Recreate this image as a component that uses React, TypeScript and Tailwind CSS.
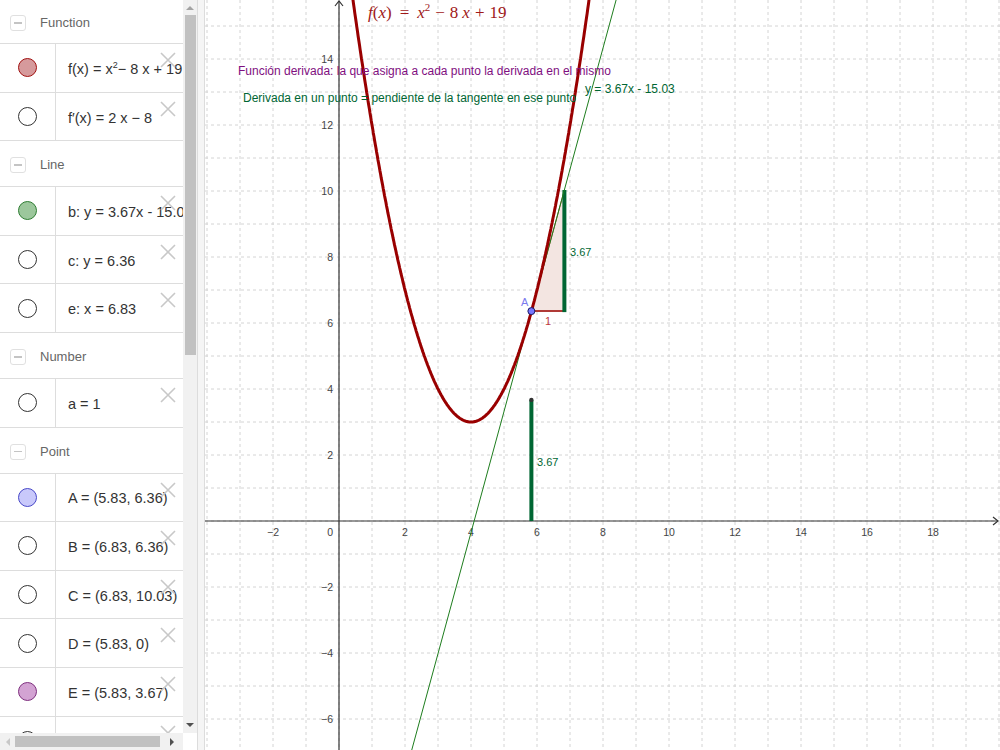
import React from "react";

type Row =
  | { kind: "header"; label: string; h: string }
  | { kind: "item"; text: React.ReactNode; fill?: string; stroke?: string };

const rows: Row[] = [
  { kind: "header", label: "Function", h: "h-[44px]" },
  {
    kind: "item",
    text: (
      <>
        f(x) = x<sup className="text-[9px]">2</sup> − 8 x + 19
      </>
    ),
    fill: "#d69a9c",
    stroke: "#a01010",
  },
  { kind: "item", text: "f′(x) = 2 x − 8" },
  { kind: "header", label: "Line", h: "h-[46px]" },
  { kind: "item", text: "b: y = 3.67x - 15.03", fill: "#9cc79c", stroke: "#2e7d32" },
  { kind: "item", text: "c: y = 6.36" },
  { kind: "item", text: "e: x = 6.83" },
  { kind: "header", label: "Number", h: "h-[46px]" },
  { kind: "item", text: "a = 1" },
  { kind: "header", label: "Point", h: "h-[46px]" },
  { kind: "item", text: "A = (5.83, 6.36)", fill: "#c9c9fb", stroke: "#4848c8" },
  { kind: "item", text: "B = (6.83, 6.36)" },
  { kind: "item", text: "C = (6.83, 10.03)" },
  { kind: "item", text: "D = (5.83, 0)" },
  { kind: "item", text: "E = (5.83, 3.67)", fill: "#d3a3d3", stroke: "#7f2f7f" },
  { kind: "item", text: "F = (6.83, 3.67)" },
];

// graph coords -> page pixels
const ox = 339;
const oy = 521;
const u = 33;
const px = (x: number) => ox + u * x;
const py = (y: number) => oy - u * y;

function XIcon() {
  return (
    <svg width="18" height="18" viewBox="0 0 18 18" className="absolute right-[6px] top-[7px]">
      <path d="M2 2 L16 16 M16 2 L2 16" stroke="#c8c8c8" strokeWidth="1.6" fill="none" />
    </svg>
  );
}

function AlgebraView() {
  return (
    <div className="w-[183px] h-full overflow-hidden bg-white" style={{ fontFamily: "'Liberation Sans', Arial, sans-serif" }}>
      {rows.map((r, i) =>
        r.kind === "header" ? (
          <div key={i} className={`${r.h} flex items-center border-b border-[#dddddd]`}>
            <div className="ml-[10px] mt-[3px] w-[16px] h-[16px] rounded-[3px] border border-[#e0e0e0] flex items-center justify-center">
              <div className="w-[8px] h-[1.5px] bg-[#c4c4c4]" />
            </div>
            <span className="ml-[14px] pt-[3px] text-[13px] text-[#666666]">{r.label}</span>
          </div>
        ) : (
          <div key={i} className="relative h-[48.6px] flex border-b border-[#dddddd]">
            <div className="w-[56px] shrink-0 border-r border-[#dddddd] flex items-center justify-center">
              <div
                className="w-[19px] h-[19px] rounded-full border"
                style={{ background: r.fill ?? "#ffffff", borderColor: r.stroke ?? "#333333" }}
              />
            </div>
            <div className="pl-[12px] pt-[4px] flex items-center whitespace-nowrap text-[14.5px] text-[#333333]">{r.text}</div>
            <XIcon />
          </div>
        )
      )}
    </div>
  );
}

function VScroll() {
  return (
    <div className="w-[14px] h-full bg-[#f1f1f1] flex flex-col items-center">
      <div className="h-[15px] flex items-center justify-center">
        <div className="w-0 h-0 border-l-[4px] border-r-[4px] border-b-[4px] border-l-transparent border-r-transparent border-b-[#a3a3a3]" />
      </div>
      <div className="w-[11px] h-[340px] bg-[#c1c1c1]" />
      <div className="flex-1" />
      <div className="h-[16px] flex items-center justify-center">
        <div className="w-0 h-0 border-l-[4px] border-r-[4px] border-t-[4px] border-l-transparent border-r-transparent border-t-[#505050]" />
      </div>
    </div>
  );
}

function HScroll() {
  return (
    <div className="h-[17px] flex">
      <div className="w-[183px] bg-[#f1f1f1] flex items-center">
        <div className="w-[15px] flex items-center justify-center">
          <div className="w-0 h-0 border-t-[4px] border-b-[4px] border-r-[4px] border-t-transparent border-b-transparent border-r-[#c8c8c8]" />
        </div>
        <div className="w-[145px] h-[11px] bg-[#c1c1c1]" />
        <div className="flex-1 flex items-center justify-center">
          <div className="w-0 h-0 border-t-[4px] border-b-[4px] border-l-[4px] border-t-transparent border-b-transparent border-l-[#505050]" />
        </div>
      </div>
      <div className="w-[14px] bg-white" />
    </div>
  );
}

function Graph() {
  const curve: string[] = [];
  for (let x = 0.3; x <= 7.7; x += 0.02) {
    curve.push(`${px(x).toFixed(1)},${py(x * x - 8 * x + 19).toFixed(1)}`);
  }
  const tanX = (y: number) => (y + 15.03) / 3.67;
  const vlines = [];
  for (let k = -4; k <= 20; k++) vlines.push(px(k));
  const hlines = [];
  for (let k = -7; k <= 16; k++) hlines.push(py(k));
  const xLabels = [-2, 2, 4, 6, 8, 10, 12, 14, 16, 18];
  const yLabels = [-6, -4, -2, 2, 4, 6, 8, 10, 12, 14];
  const num = (n: number) => (n < 0 ? `−${-n}` : `${n}`);
  const A = { x: px(5.83), y: py(6.36) };
  const B = { x: px(6.83), y: py(6.36) };
  const C = { x: px(6.83), y: py(10.03) };
  const E = { x: px(5.83), y: py(3.67) };
  return (
    <svg width="795" height="750" viewBox="205 0 795 750" className="block" style={{ fontFamily: "'Liberation Sans', Arial, sans-serif" }}>
      <rect x="205" y="0" width="795" height="750" fill="#ffffff" />
      <g stroke="#d4d4d4" strokeWidth="1" strokeDasharray="3 3">
        {vlines.map((x) => (
          <line key={"v" + x} x1={x} y1={0} x2={x} y2={750} />
        ))}
        {hlines.map((y) => (
          <line key={"h" + y} x1={205} y1={y} x2={1000} y2={y} />
        ))}
      </g>
      {/* axes */}
      <g stroke="#333333" strokeWidth="1.2" fill="none">
        <line x1={205} y1={oy} x2={998} y2={oy} />
        <line x1={ox} y1={750} x2={ox} y2={1} />
        <path d={`M993 ${oy - 4} L998 ${oy} L993 ${oy + 4}`} />
        <path d={`M${ox - 4} 6 L${ox} 1 L${ox + 4} 6`} />
      </g>
      <g fill="#444444" fontSize="10.5">
        {xLabels.map((n) => (
          <text key={"xl" + n} x={px(n)} y={oy + 15} textAnchor="middle">
            {num(n)}
          </text>
        ))}
        <text x={ox - 6} y={oy + 15} textAnchor="end">
          0
        </text>
        {yLabels.map((n) => (
          <text key={"yl" + n} x={ox - 6} y={py(n) + 4} textAnchor="end">
            {num(n)}
          </text>
        ))}
      </g>
      {/* triangle */}
      <polygon points={`${A.x},${A.y} ${B.x},${B.y} ${C.x},${C.y}`} fill="#f3e5e1" stroke="#a0522d" strokeWidth="1" />
      <line x1={A.x} y1={A.y} x2={B.x} y2={B.y} stroke="#b03a36" strokeWidth="2" />
      <line x1={B.x} y1={B.y + 1} x2={C.x} y2={C.y} stroke="#006633" strokeWidth="4" />
      <line x1={A.x} y1={oy} x2={E.x} y2={E.y} stroke="#006633" strokeWidth="4" />
      {/* tangent */}
      <line x1={px(tanX(15.8))} y1={py(15.8)} x2={px(tanX(-7.2))} y2={py(-7.2)} stroke="#1e7d1e" strokeWidth="1" />
      {/* parabola */}
      <polyline points={curve.join(" ")} fill="none" stroke="#990000" strokeWidth="3" strokeLinejoin="round" />
      {/* points */}
      <circle cx={E.x} cy={E.y} r="2.2" fill="#333333" />
      <circle cx={A.x} cy={A.y} r="3.5" fill="#7777ff" stroke="#1a1a66" strokeWidth="1" />
      <text x={521} y={306} fontSize="11" fill="#7a7aee">
        A
      </text>
      <text x={545} y={325} fontSize="11" fill="#c0393b">
        1
      </text>
      <text x={570} y={256} fontSize="11" fill="#006633">
        3.67
      </text>
      <text x={537} y={466} fontSize="11" fill="#006633">
        3.67
      </text>
      {/* captions */}
      <text x={238} y={75} fontSize="12" fill="#7f0f7f">
        Función derivada: la que asigna a cada punto la derivada en el mismo
      </text>
      <text x={243} y={102} fontSize="12" fill="#006633">
        Derivada en un punto = pendiente de la tangente en ese punto
      </text>
      <text x={585} y={93} fontSize="12" fill="#006633">
        y = 3.67x - 15.03
      </text>
      <text x={368} y={18} fontSize="17" fill="#a01818" style={{ fontFamily: "'Liberation Serif', 'Times New Roman', serif" }}>
        <tspan fontStyle="italic">f</tspan>
        <tspan>(</tspan>
        <tspan fontStyle="italic">x</tspan>
        <tspan>)</tspan>
        <tspan dx="8">=</tspan>
        <tspan dx="8" fontStyle="italic">x</tspan>
        <tspan fontSize="11" dy="-7">2</tspan>
        <tspan dy="7" dx="5">−</tspan>
        <tspan dx="5">8</tspan>
        <tspan dx="4" fontStyle="italic">x</tspan>
        <tspan dx="5">+</tspan>
        <tspan dx="5">19</tspan>
      </text>
    </svg>
  );
}

export default function App() {
  return (
    <div className="w-[1000px] h-[750px] flex overflow-hidden bg-white">
      <div className="w-[197px] h-full flex flex-col">
        <div className="flex-1 flex min-h-0">
          <AlgebraView />
          <VScroll />
        </div>
        <HScroll />
      </div>
      <div className="w-[8px] h-full bg-[#f5f5f5] border-l border-r border-[#dcdcdc]" />
      <div className="flex-1 h-full">
        <Graph />
      </div>
    </div>
  );
}
